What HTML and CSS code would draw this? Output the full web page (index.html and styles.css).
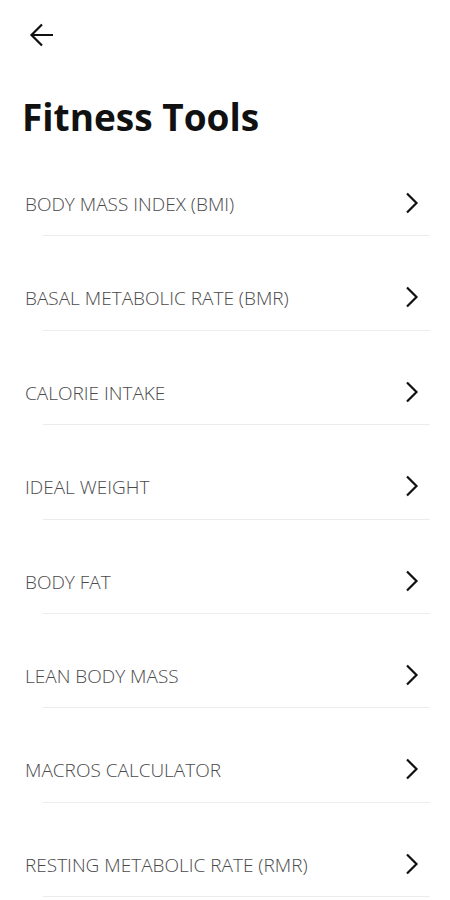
FILE: index.html
```html
<!DOCTYPE html>
<html lang="en">
  <head>
    <meta charset="UTF-8" />
    <meta name="viewport" content="width=device-width, initial-scale=1.0" />
    <title>Fitness Tools</title>
    <link rel="stylesheet" href="styles.css">
  </head>
  <body>
    <div class="screen">
      <div class="top-bar">
        <button class="back-btn" aria-label="Back">
          <svg width="26" height="26" viewBox="0 0 26 26">
            <path d="M24 13H3M13 2.5L2.5 13L13 23.5" fill="none" stroke="#111" stroke-width="2.2" />
          </svg>
        </button>
      </div>

      <h1 class="page-title">Fitness Tools</h1>

      <ul class="tool-list">
        <li class="tool-item">
          <span class="tool-name">BODY MASS INDEX (BMI)</span>
          <svg class="chevron" width="14" height="22" viewBox="0 0 14 22"><path d="M2 1.5L11.5 11L2 20.5" fill="none" stroke="#111" stroke-width="2.2" /></svg>
        </li>
        <li class="tool-item">
          <span class="tool-name">BASAL METABOLIC RATE (BMR)</span>
          <svg class="chevron" width="14" height="22" viewBox="0 0 14 22"><path d="M2 1.5L11.5 11L2 20.5" fill="none" stroke="#111" stroke-width="2.2" /></svg>
        </li>
        <li class="tool-item">
          <span class="tool-name">CALORIE INTAKE</span>
          <svg class="chevron" width="14" height="22" viewBox="0 0 14 22"><path d="M2 1.5L11.5 11L2 20.5" fill="none" stroke="#111" stroke-width="2.2" /></svg>
        </li>
        <li class="tool-item">
          <span class="tool-name">IDEAL WEIGHT</span>
          <svg class="chevron" width="14" height="22" viewBox="0 0 14 22"><path d="M2 1.5L11.5 11L2 20.5" fill="none" stroke="#111" stroke-width="2.2" /></svg>
        </li>
        <li class="tool-item">
          <span class="tool-name">BODY FAT</span>
          <svg class="chevron" width="14" height="22" viewBox="0 0 14 22"><path d="M2 1.5L11.5 11L2 20.5" fill="none" stroke="#111" stroke-width="2.2" /></svg>
        </li>
        <li class="tool-item">
          <span class="tool-name">LEAN BODY MASS</span>
          <svg class="chevron" width="14" height="22" viewBox="0 0 14 22"><path d="M2 1.5L11.5 11L2 20.5" fill="none" stroke="#111" stroke-width="2.2" /></svg>
        </li>
        <li class="tool-item">
          <span class="tool-name">MACROS CALCULATOR</span>
          <svg class="chevron" width="14" height="22" viewBox="0 0 14 22"><path d="M2 1.5L11.5 11L2 20.5" fill="none" stroke="#111" stroke-width="2.2" /></svg>
        </li>
        <li class="tool-item">
          <span class="tool-name">RESTING METABOLIC RATE (RMR)</span>
          <svg class="chevron" width="14" height="22" viewBox="0 0 14 22"><path d="M2 1.5L11.5 11L2 20.5" fill="none" stroke="#111" stroke-width="2.2" /></svg>
        </li>
      </ul>
    </div>
  </body>
</html>
```

FILE: styles.css
```css
body {
  margin: 0;
  font-family: "Open Sans", Arial, sans-serif;
  background-color: #fff;
  color: #111;
}
.screen {
  width: 450px;
  height: 900px;
  overflow: hidden;
}
.top-bar {
  height: 91px;
  box-sizing: border-box;
  padding: 22px 0 0 29px;
  display: flex;
  align-items: flex-start;
}
.back-btn {
  background: none;
  border: none;
  padding: 0;
  display: flex;
  cursor: pointer;
}
.page-title {
  margin: 0;
  padding-left: 22px;
  font-size: 37px;
  font-weight: 700;
  line-height: 51px;
  color: #111;
}
.tool-list {
  list-style: none;
  margin: 0;
  padding: 0;
}
.tool-item {
  display: flex;
  align-items: center;
  justify-content: space-between;
  padding: 50px 31px 20.4px 25px;
  line-height: 24px;
  position: relative;
}
.tool-item::after {
  content: "";
  position: absolute;
  left: 43px;
  right: 20px;
  bottom: 0;
  height: 1px;
  background: #ececec;
}
.tool-name {
  font-size: 19px;
  font-weight: 300;
  color: #4a4a4a;
}
.chevron {
  margin-top: -2px;
}
```
